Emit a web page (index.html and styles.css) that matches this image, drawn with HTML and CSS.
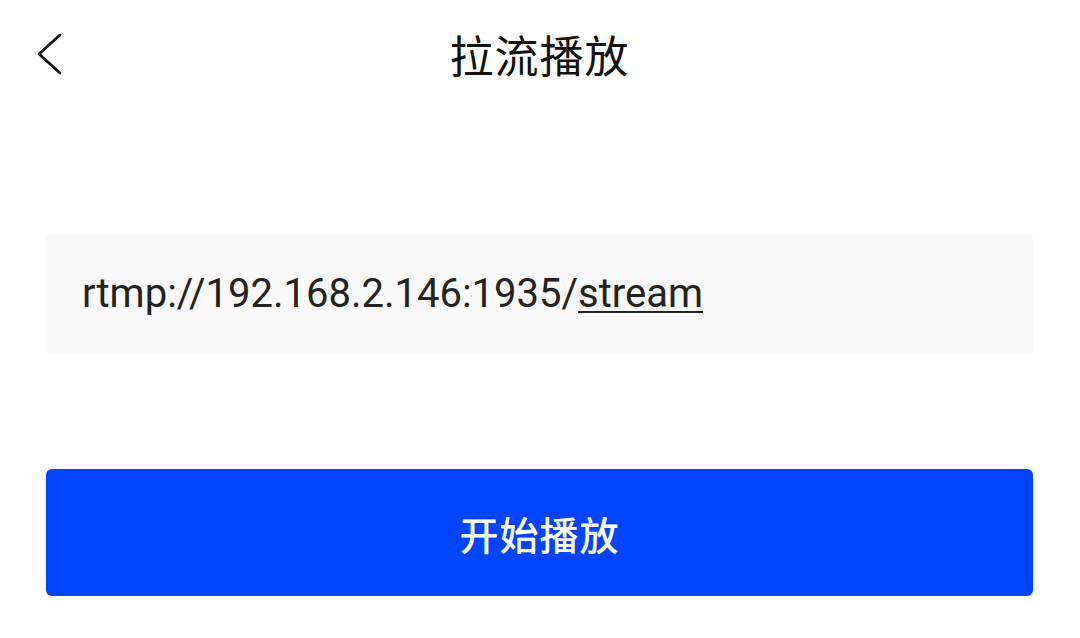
FILE: index.html
```html
<!doctype html>
<html lang="zh-CN">

<head>
    <meta charset="UTF-8" />
    <meta name="viewport" content="width=device-width, initial-scale=1.0" />
    <title>拉流播放</title>
    <link rel="stylesheet" href="styles.css">
</head>

<body>
    <div class="page">
        <header class="topbar">
            <button class="back" aria-label="返回">
                <svg width="30" height="44" viewBox="0 0 30 44">
                    <polyline points="24,4 3,23 24,42" fill="none" stroke="#111" stroke-width="2.8"
                        stroke-linecap="round" stroke-linejoin="round" />
                </svg>
            </button>
            <h1 class="title">拉流播放</h1>
        </header>

        <div class="url-box">
            <span class="url">rtmp://192.168.2.146:1935/<u>stream</u></span>
        </div>

        <button class="play">开始播放</button>
    </div>
</body>

</html>
```

FILE: styles.css
```css
body {
    margin: 0;
    background: #fff;
    font-family: Roboto, "Noto Sans CJK SC", sans-serif;
    color: #111;
}

.page {
    padding: 0 47px 0 46px;
}

.topbar {
    position: relative;
    height: 112px;
    display: flex;
    align-items: center;
    justify-content: center;
}

.back {
    position: absolute;
    left: -10px;
    top: 31px;
    padding: 0;
    border: 0;
    background: none;
}

.title {
    margin: 0 0 4px;
    font-family: "Noto Sans CJK SC", sans-serif;
    font-size: 44px;
    font-weight: 400;
    letter-spacing: 1px;
}

.url-box {
    margin-top: 121px;
    height: 121px;
    background: #f9f9f9;
    border-radius: 4px;
    display: flex;
    align-items: center;
    padding-left: 36px;
    box-shadow: 0 0 3px rgba(0, 0, 0, 0.02);
}

.url {
    font-size: 40px;
    color: #222;
    letter-spacing: 0;
}

.url u {
    text-underline-offset: 4px;
    text-decoration-thickness: 2px;
}

.play {
    display: block;
    width: 100%;
    height: 127px;
    margin-top: 115px;
    border: 0;
    border-radius: 6px;
    background: #0044ff;
    color: #fff;
    font-family: "Noto Sans CJK SC", sans-serif;
    font-size: 39px;
    font-weight: 500;
    letter-spacing: 1px;
    box-shadow: 0 2px 6px rgba(0, 0, 0, 0.08);
}
```
